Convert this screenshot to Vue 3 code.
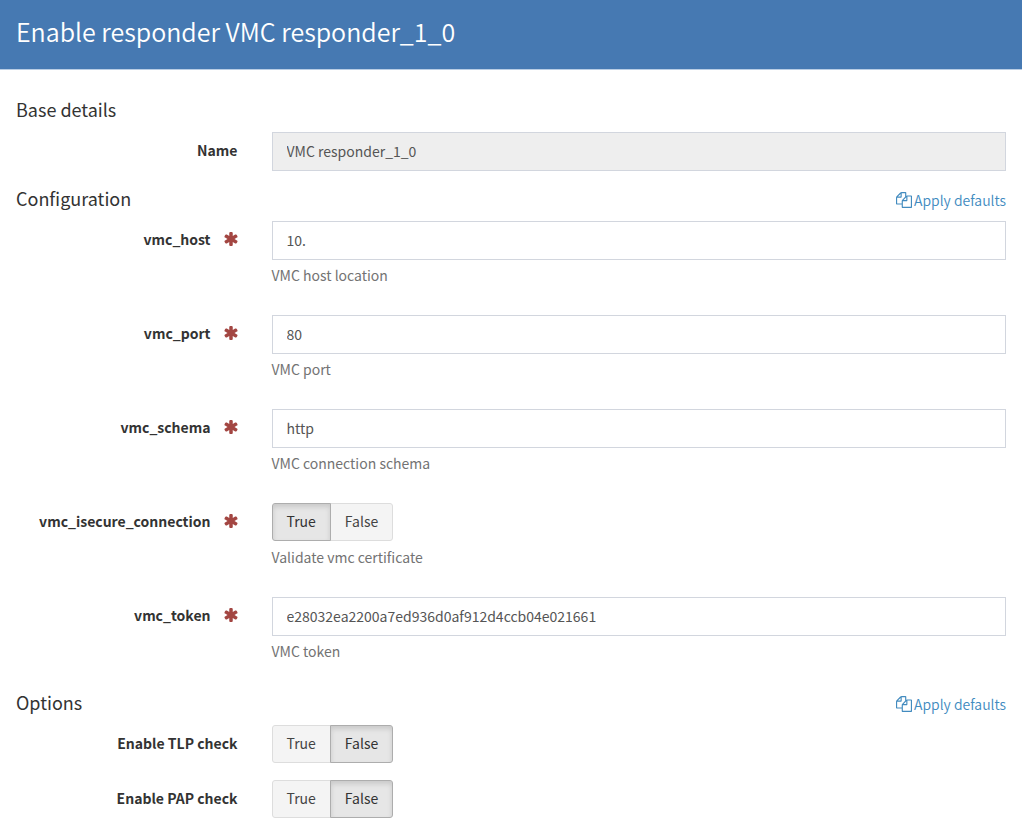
<script setup>
import { reactive } from 'vue'

const fields = reactive([
  { name: 'vmc_host', type: 'text', value: '10.', help: 'VMC host location' },
  { name: 'vmc_port', type: 'text', value: '80', help: 'VMC port' },
  { name: 'vmc_schema', type: 'text', value: 'http', help: 'VMC connection schema' },
  { name: 'vmc_isecure_connection', type: 'bool', value: true, help: 'Validate vmc certificate' },
  { name: 'vmc_token', type: 'text', value: 'e28032ea2200a7ed936d0af912d4ccb04e021661', help: 'VMC token' }
])

const options = reactive([
  { id: 'tlp', label: 'Enable TLP check', value: false },
  { id: 'pap', label: 'Enable PAP check', value: false }
])
</script>

<template>
  <main class="dialog">
    <header class="header">
      <h1>Enable responder VMC responder_1_0</h1>
    </header>

    <form class="body" @submit.prevent>
      <section>
        <div class="section-head">
          <h2>Base details</h2>
        </div>
        <div class="row">
          <label class="label" for="name">Name</label>
          <div class="field">
            <input id="name" class="control" type="text" value="VMC responder_1_0" disabled />
          </div>
        </div>
      </section>

      <section>
        <div class="section-head">
          <h2>Configuration</h2>
          <a href="#" class="defaults" @click.prevent>
            <svg class="copy" viewBox="0 0 1792 1792" aria-hidden="true"><path d="M1696 384q40 0 68 28t28 68v1216q0 40-28 68t-68 28h-960q-40 0-68-28t-28-68v-288h-544q-40 0-68-28t-28-68v-672q0-40 20-88t48-76l408-408q28-28 76-48t88-20h416q40 0 68 28t28 68v328q68-40 128-40h416zm-544 213l-299 299h299v-299zm-640-384l-299 299h299v-299zm196 647l316-316v-416h-384v416q0 40-28 68t-68 28h-416v640h512v-256q0-40 20-88t48-76zm956 804v-1152h-384v416q0 40-28 68t-68 28h-416v640h896z" /></svg>
            <span>Apply defaults</span>
          </a>
        </div>
        <div v-for="f in fields" :key="f.name" class="row with-help">
          <label :id="f.name + '-label'" class="label" :for="f.type === 'text' ? f.name : null">
            <span>{{ f.name }}</span>
            <svg class="required" viewBox="192 128 1408 1536" aria-hidden="true"><path d="M1546 1050q46 26 59.5 77.5t-12.5 97.5l-64 110q-26 46-77.5 59.5t-97.5-12.5l-266-153v307q0 52-38 90t-90 38h-128q-52 0-90-38t-38-90v-307l-266 153q-46 26-97.5 12.5t-77.5-59.5l-64-110q-26-46-12.5-97.5t59.5-77.5l266-154-266-154q-46-26-59.5-77.5t12.5-97.5l64-110q26-46 77.5-59.5t97.5 12.5l266 153v-307q0-52 38-90t90-38h128q52 0 90 38t38 90v307l266-153q46-26 97.5-12.5t77.5 59.5l64 110q26 46 12.5 97.5t-59.5 77.5l-266 154z" /></svg>
          </label>
          <div class="field">
            <input v-if="f.type === 'text'" :id="f.name" v-model="f.value" class="control" type="text" />
            <div v-else class="toggle" role="group" :aria-labelledby="f.name + '-label'">
              <button type="button" :class="{ active: f.value }" :aria-pressed="f.value" @click="f.value = true">True</button>
              <button type="button" :class="{ active: !f.value }" :aria-pressed="!f.value" @click="f.value = false">False</button>
            </div>
            <p class="help">{{ f.help }}</p>
          </div>
        </div>
      </section>

      <section>
        <div class="section-head">
          <h2>Options</h2>
          <a href="#" class="defaults" @click.prevent>
            <svg class="copy" viewBox="0 0 1792 1792" aria-hidden="true"><path d="M1696 384q40 0 68 28t28 68v1216q0 40-28 68t-68 28h-960q-40 0-68-28t-28-68v-288h-544q-40 0-68-28t-28-68v-672q0-40 20-88t48-76l408-408q28-28 76-48t88-20h416q40 0 68 28t28 68v328q68-40 128-40h416zm-544 213l-299 299h299v-299zm-640-384l-299 299h299v-299zm196 647l316-316v-416h-384v416q0 40-28 68t-68 28h-416v640h512v-256q0-40 20-88t48-76zm956 804v-1152h-384v416q0 40-28 68t-68 28h-416v640h896z" /></svg>
            <span>Apply defaults</span>
          </a>
        </div>
        <div v-for="o in options" :key="o.id" class="row">
          <span :id="o.id + '-label'" class="label">{{ o.label }}</span>
          <div class="field">
            <div class="toggle" role="group" :aria-labelledby="o.id + '-label'">
              <button type="button" :class="{ active: o.value }" :aria-pressed="o.value" @click="o.value = true">True</button>
              <button type="button" :class="{ active: !o.value }" :aria-pressed="!o.value" @click="o.value = false">False</button>
            </div>
          </div>
        </div>
      </section>
    </form>
  </main>
</template>

<style>
body {
  background: #fff;
}
</style>

<style scoped>
.dialog,
.dialog input,
.dialog button {
  font-family: "Noto Sans CJK SC", "Source Sans Pro", sans-serif;
  font-size: 14px;
  line-height: 20px;
}
.dialog {
  color: #333;
}
.dialog *,
.dialog {
  box-sizing: border-box;
}
.header {
  padding: 15px 16px 21px;
  background: #4679b2;
  border-bottom: 1px solid #b9cde4;
}
h1,
h2,
p {
  margin: 0;
  font-weight: 400;
}
h1 {
  color: #fff;
  font-size: 25px;
  font-weight: 350;
  line-height: 33px;
}
h2 {
  font-size: 18px;
  line-height: 22px;
}
.body {
  padding-top: 28px;
}
.section-head {
  display: flex;
  align-items: flex-start;
  justify-content: space-between;
  min-height: 34px;
  padding: 0 16px;
}
.defaults {
  display: flex;
  align-items: center;
  gap: 2px;
  padding-top: 3px;
  color: #428bbf;
  font-weight: 350;
  text-decoration: none;
}
.copy {
  width: 16px;
  height: 16px;
  fill: currentColor;
}
.row {
  display: flex;
  align-items: flex-start;
  padding-bottom: 16px;
}
.row.with-help {
  padding-bottom: 30px;
}
.label {
  display: flex;
  flex: 0 0 25%;
  align-items: center;
  justify-content: flex-end;
  gap: 13px;
  padding: 8px 18px 0 0;
  font-weight: 700;
}
.required {
  width: 14px;
  height: 14px;
  fill: #a34642;
}
.field {
  flex: 1;
  min-width: 0;
  padding: 0 16px;
}
.control {
  display: block;
  width: 100%;
  height: 39px;
  padding: 0 14px 2px;
  color: #555;
  background: #fff;
  border: 1px solid #d2d6de;
  border-radius: 0;
}
.control:disabled {
  background: #eee;
}
.toggle {
  display: flex;
  align-items: flex-start;
  min-height: 39px;
}
.toggle button {
  height: 38px;
  padding: 0 14px 2px;
  color: #444;
  background: #f4f4f4;
  border: 1px solid #ddd;
  border-radius: 3px 0 0 3px;
}
.toggle button + button {
  margin-left: -1px;
  border-radius: 0 3px 3px 0;
}
.toggle button.active {
  position: relative;
  color: #333;
  background: #e6e6e6;
  border-color: #adadad;
  box-shadow: inset 0 3px 5px rgba(0, 0, 0, 0.125);
}
.help {
  margin-top: 5px;
  color: #737373;
}
</style>
